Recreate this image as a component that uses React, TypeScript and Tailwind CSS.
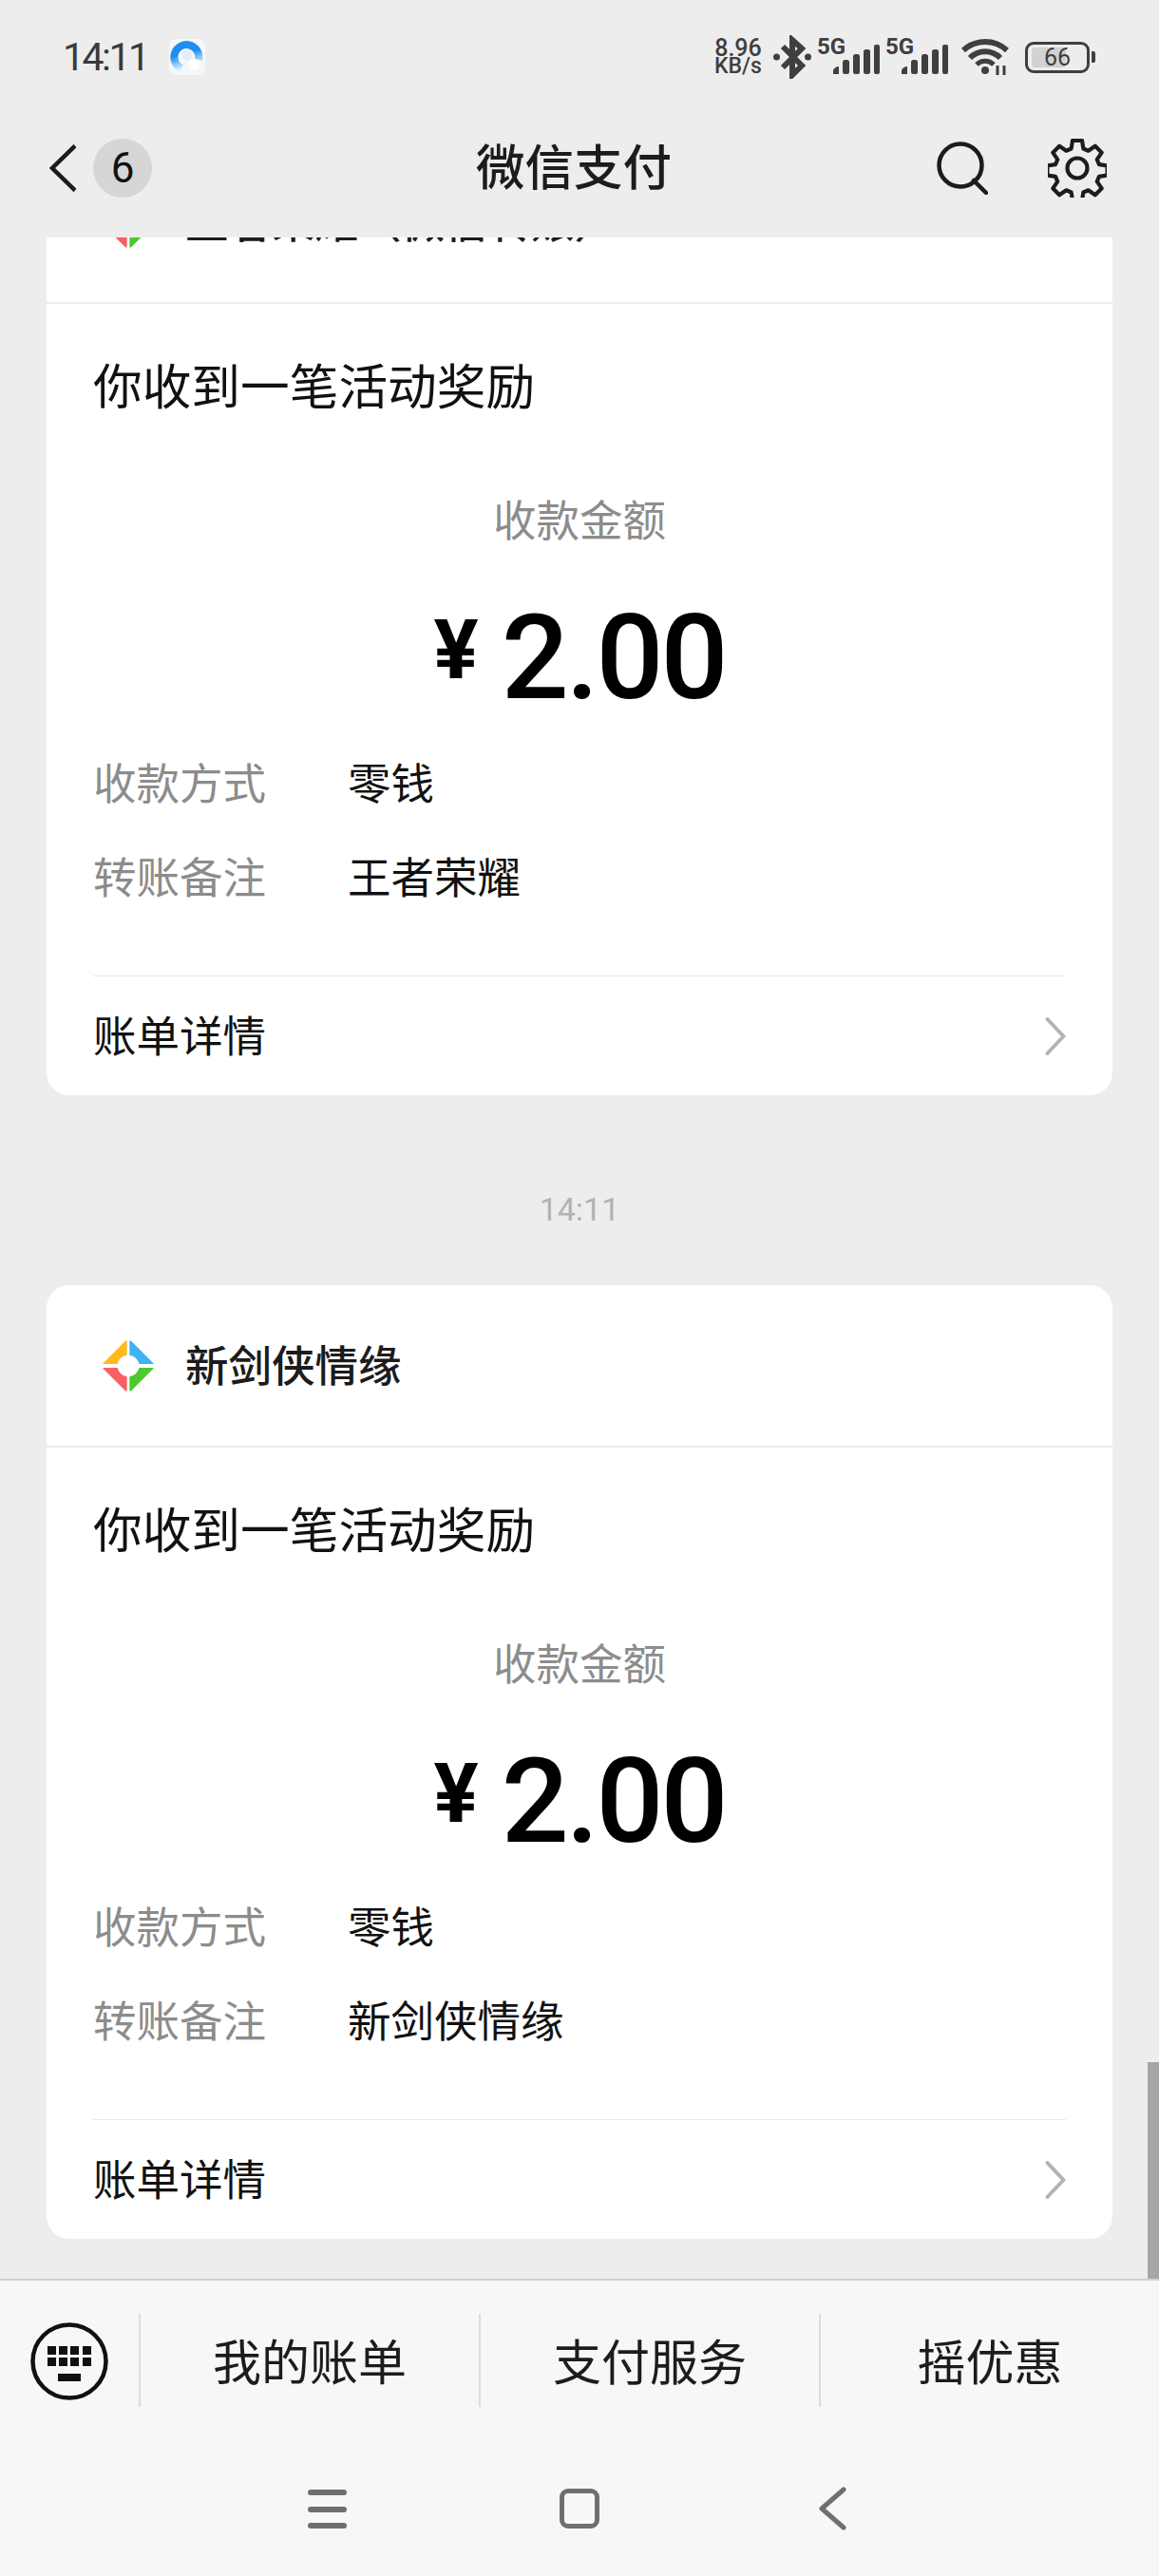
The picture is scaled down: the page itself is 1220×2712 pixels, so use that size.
const CJK = "font-['Noto_Sans_CJK_SC','Noto_Sans',sans-serif]";

function Logo() {
  const q = "M6 74 L74 6 Q80 1 80 8 V50 A34 34 0 0 0 50 78 H8 Q1 78 6 74Z";
  return (
    <svg width="56" height="56" viewBox="0 0 168 168" className="shrink-0">
      <path d={q} fill="#ffba1f" />
      <path d={q} fill="#3fb1f5" transform="translate(168 0) scale(-1 1)" />
      <path d={q} fill="#fa5f63" transform="translate(0 168) scale(1 -1)" />
      <path d={q} fill="#4cc92c" transform="translate(168 168) scale(-1 -1)" />
    </svg>
  );
}

function Card({ name, note }: { name: string; note: string }) {
  return (
    <div className="mx-[49px] w-[1122px] rounded-[24px] bg-white">
      <div className="flex h-[171px] items-center gap-[32px] border-b-2 border-[#ececec] pl-[58px]">
        <Logo />
        <span className="mb-[5px] text-[45.5px] font-medium leading-[60px] whitespace-nowrap text-[#1c1c1c]">{name}</span>
      </div>
      <div className="px-[49px] pt-[54px]">
        <div className="text-[51.7px] leading-[60px] text-[#111]">你收到一笔活动奖励</div>
        <div className="mt-[81px] text-center text-[45.5px] leading-[60px] text-[#8c8c8c]">收款金额</div>
        <div className="mt-[47px] flex h-[140px] items-center justify-center text-black">
          <span className="mr-[24px] font-['Roboto',sans-serif] text-[88px] font-bold leading-none -translate-y-[8px]">¥</span>
          <span className="font-['Roboto',sans-serif] text-[125px] font-medium leading-none tracking-[-3px]">2.00</span>
        </div>
        <div className="mt-[30px] flex text-[45.5px] leading-[60px]">
          <span className="w-[268px] text-[#8c8c8c]">收款方式</span>
          <span className="text-[#111]">零钱</span>
        </div>
        <div className="mt-[39px] flex text-[45.5px] leading-[60px]">
          <span className="w-[268px] text-[#8c8c8c]">转账备注</span>
          <span className="text-[#111]">{note}</span>
        </div>
        <div className="mt-[76px] h-[1px] bg-[#e8e8e8]" />
        <div className="flex h-[125px] items-center justify-between">
          <span className="mb-[6px] text-[45.5px] leading-[60px] text-[#111]">账单详情</span>
          <svg width="22" height="40" viewBox="0 0 22 40" fill="none" stroke="#b4b4b4" strokeWidth="4" strokeLinecap="round" strokeLinejoin="round">
            <path d="M2.5 2 L19.5 20 L2.5 38" />
          </svg>
        </div>
      </div>
    </div>
  );
}

function StatusBar() {
  const Bars = () => (
    <svg width="50" height="32" viewBox="0 0 50 32" fill="#3f3f3f">
      <path d="M1 31 V27 Q3 23 7 23 V31Z" />
      <rect x="11" y="16" width="7" height="15" rx="2.5" />
      <rect x="22" y="10" width="7" height="21" rx="2.5" />
      <rect x="33" y="5" width="7" height="26" rx="2.5" />
      <rect x="44" y="0" width="6" height="31" rx="2" />
    </svg>
  );
  const Sim = () => (
    <div className="relative h-[38px] w-[66px]">
      <span className="absolute left-0 top-[-4px] font-['Roboto',sans-serif] text-[24px] font-bold leading-[24px] text-[#3f3f3f]">5G</span>
      <div className="absolute bottom-0 right-0"><Bars /></div>
    </div>
  );
  return (
    <div className="flex h-[120px] items-center justify-between pl-[66px] pr-[67px]">
      <div className="flex items-center gap-[22px]">
        <span className="font-['Roboto',sans-serif] text-[41px] leading-[40px] tracking-[-2.5px] text-[#3a3a3a]">14:11</span>
        <svg width="38" height="38" viewBox="0 0 38 38">
          <defs>
            <linearGradient id="qb" x1="0" y1="0" x2="0.3" y2="1">
              <stop offset="0.45" stopColor="#1e8ef0" />
              <stop offset="1" stopColor="#d8eefc" />
            </linearGradient>
          </defs>
          <rect width="38" height="38" rx="8" fill="#f5f8fb" />
          <path d="M13 31 A13 13 0 1 1 31 22" fill="none" stroke="url(#qb)" strokeWidth="8" />
          <circle cx="26" cy="27" r="6" fill="#ffffff" />
          <circle cx="19" cy="17" r="5.5" fill="#e4edf4" />
        </svg>
      </div>
      <div className="flex items-center">
        <div className="mr-[11px] flex w-[52px] flex-col items-center font-['Roboto',sans-serif] text-[#3f3f3f]">
          <span className="text-[25px] font-medium leading-[20px]">8.96</span>
          <span className="text-[23px] font-medium leading-[18px]">KB/s</span>
        </div>
        <svg width="40" height="46" viewBox="0 0 40 46" fill="none" stroke="#3f3f3f" strokeWidth="6" className="mr-[6px]">
          <path d="M10 12 L30 32 L20 42 V5 L30 14 L10 34" />
          <circle cx="3.5" cy="23" r="3.5" fill="#3f3f3f" stroke="none" />
          <circle cx="36.5" cy="23" r="3.5" fill="#3f3f3f" stroke="none" />
        </svg>
        <Sim />
        <div className="ml-[6px]"><Sim /></div>
        <svg width="50" height="40" viewBox="0 0 50 40" fill="none" stroke="#3f3f3f" strokeWidth="6" className="ml-[14px]">
          <path d="M2 13 C15 1 35 1 48 13" />
          <path d="M9 21 C18 12 32 12 41 21" />
          <path d="M16 28 C21 23 29 23 34 28" strokeWidth="5" />
          <circle cx="25" cy="34" r="4" fill="#3f3f3f" stroke="none" />
          <path d="M38 29 V39 M45 29 V39" strokeWidth="3" />
        </svg>
        <div className="relative ml-[17px] flex h-[33px] w-[68px] items-center justify-center rounded-[9px] border-[3px] border-[#3f3f3f] font-['Roboto',sans-serif] text-[25px] leading-none text-[#3f3f3f]">
          <div className="absolute bottom-[3px] left-[4px] top-[3px] w-[36px] rounded-[3px] bg-[#d2d2d2]" />
          <span className="relative">66</span>
        </div>
        <div className="ml-[2px] h-[12px] w-[4px] rounded-r-[2px] bg-[#3f3f3f]" />
      </div>
    </div>
  );
}

function Header() {
  return (
    <div className="relative flex h-[130px] items-center justify-between pb-[16px] pl-[52px] pr-[55px]">
      <div className="flex items-center gap-[18px]">
        <svg width="28" height="50" viewBox="0 0 28 50" fill="none" stroke="#1c1c1c" strokeWidth="4.5">
          <path d="M27 1.5 L3 25 L27 48.5" />
        </svg>
        <div className="flex h-[62px] w-[62px] items-center justify-center rounded-full bg-[#d6d6d6] font-['Roboto',sans-serif] text-[44px] leading-none text-[#111]">6</div>
      </div>
      <div className="absolute left-[501px] top-[17px] text-[51.5px] font-medium leading-[72px] text-[#1c1c1c]">微信支付</div>
      <div className="flex items-center gap-[63px]">
        <svg width="54" height="56" viewBox="0 0 54 56" fill="none" stroke="#1c1c1c" strokeWidth="4.5" strokeLinecap="round">
          <circle cx="25" cy="25" r="22.5" />
          <path d="M39 41 L52 54" />
        </svg>
        <svg width="62" height="62" viewBox="0.8 0.8 22.4 22.4" fill="none" stroke="#1c1c1c" strokeWidth="1.5" strokeLinejoin="round">
          <path d="M10.2 1.5h3.6l.5 3.1 1.9.8 2.6-1.8 2.5 2.5-1.8 2.6.8 1.9 3.1.5v3.6l-3.1.5-.8 1.9 1.8 2.6-2.5 2.5-2.6-1.8-1.9.8-.5 3.1h-3.6l-.5-3.1-1.9-.8-2.6 1.8-2.5-2.5 1.8-2.6-.8-1.9-3.1-.5v-3.6l3.1-.5.8-1.9-1.8-2.6 2.5-2.5 2.6 1.8 1.9-.8z" />
          <circle cx="12" cy="12" r="3.8" />
        </svg>
      </div>
    </div>
  );
}

function BottomBar() {
  const Item = ({ label }: { label: string }) => (
    <div className="flex flex-1 items-center justify-center">
      <div className="flex h-[98px] w-full items-center justify-center border-l-2 border-[#dcdcdc] pb-[2px] text-[51px] leading-[60px] text-[#1c1c1c]">{label}</div>
    </div>
  );
  return (
    <div className="h-[313px] shrink-0 border-t-2 border-[#cfcfcf] bg-[#f7f7f7]">
      <div className="flex h-[135px] items-start pt-[35px]">
        <div className="flex w-[146px] justify-center">
          <svg width="82" height="82" viewBox="0 0 82 82" className="mt-[9px]">
            <circle cx="41" cy="41" r="38.5" fill="none" stroke="#111" strokeWidth="4.5" />
            {[18, 30, 42, 55].map((x) => (
              <g key={x}>
                <rect x={x} y="25" width="9" height="9" fill="#111" />
                <rect x={x} y="37" width="9" height="9" fill="#111" />
              </g>
            ))}
            <rect x="29" y="54" width="24" height="8" fill="#111" />
          </svg>
        </div>
        <div className="flex flex-1">
          <Item label="我的账单" />
          <Item label="支付服务" />
          <Item label="摇优惠" />
        </div>
      </div>
      <div className="relative h-[176px]">
        <div className="absolute left-[324px] top-[85px] flex h-[41px] w-[41px] flex-col justify-between">
          <div className="h-[6px] rounded-full bg-[#6f6f6f]" />
          <div className="h-[6px] rounded-full bg-[#6f6f6f]" />
          <div className="h-[6px] rounded-full bg-[#6f6f6f]" />
        </div>
        <div className="absolute left-[589px] top-[84px] h-[42px] w-[42px] rounded-[9px] border-[5px] border-[#6f6f6f]" />
        <svg width="30" height="46" viewBox="0 0 30 46" fill="none" stroke="#6f6f6f" strokeWidth="5" strokeLinecap="round" strokeLinejoin="round" className="absolute left-[861px] top-[82px]">
          <path d="M27 3 L4 23 L27 43" />
        </svg>
      </div>
    </div>
  );
}

export default function App() {
  return (
    <div className={`flex h-[2712px] w-[1220px] flex-col overflow-hidden bg-[#ededed] ${CJK}`}>
      <div className="shrink-0">
        <StatusBar />
        <Header />
      </div>
      <div className="relative min-h-0 flex-1 overflow-hidden">
        <div className="-mt-[101px]">
          <Card name="王者荣耀（微信转账）" note="王者荣耀" />
          <div className="flex h-[200px] items-center justify-center pt-[40px] font-['Roboto',sans-serif] text-[34px] leading-none text-[#b2b2b2]">14:11</div>
          <Card name="新剑侠情缘" note="新剑侠情缘" />
        </div>
        <div className="absolute bottom-0 right-0 h-[228px] w-[12px] bg-[#a6a6a6]" />
      </div>
      <BottomBar />
    </div>
  );
}
